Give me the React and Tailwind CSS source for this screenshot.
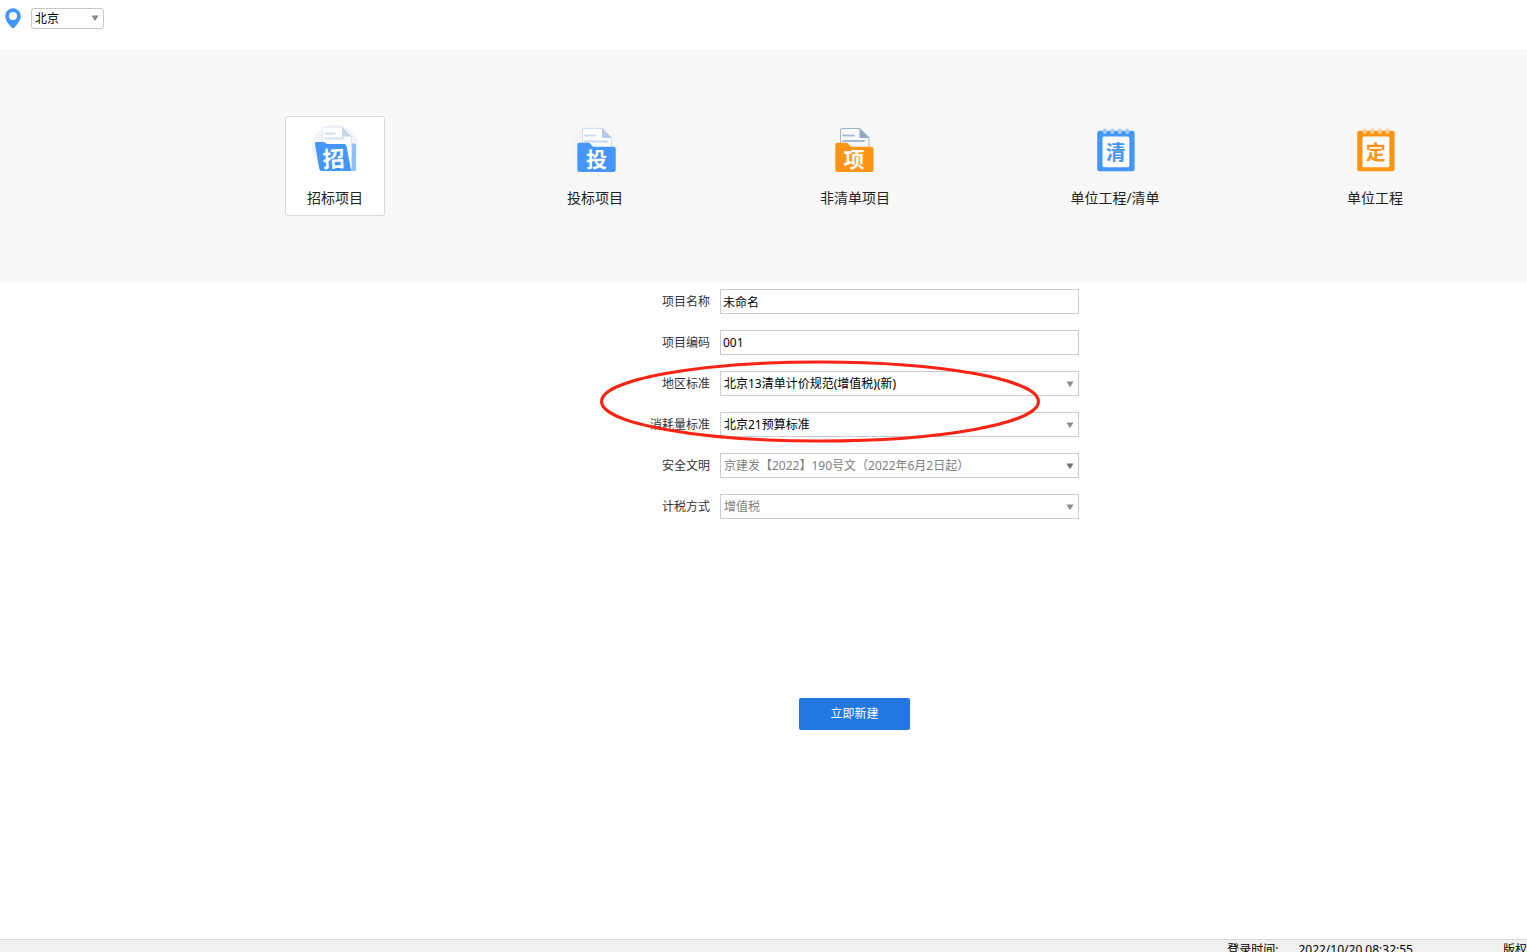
const glyph = "font-['Noto_Sans_CJK_SC',sans-serif] font-bold";

function Pin() {
  return (
    <svg className="h-[21px] w-4 shrink-0" viewBox="0 0 16 21" aria-hidden="true">
      <path fillRule="evenodd" fill="#4496fb" d="M8 .3a7.8 7.8 0 0 1 7.8 7.8c0 4.100-3.300 7.900-6.100 11.200-1 1.200-2.400 1.200-3.400 0C3.500 16 .2 12.200.2 8.100A7.800 7.800 0 0 1 8 .3Zm0 3.800a4 4 0 1 0 0 8 4 4 0 0 0 0-8Z" />
    </svg>
  );
}

function Arrow({ className, color = '#8b8b8b' }) {
  return (
    <svg className={`pointer-events-none absolute h-[6px] w-2 ${className}`} viewBox="0 0 8 6" aria-hidden="true">
      <path fill={color} d="M.5.5h7L4.500 5.500h-1Z" />
    </svg>
  );
}

function TiltedFolder() {
  return (
    <svg className="size-[50px]" viewBox="0 0 50 50" aria-hidden="true">
      <circle cx="25" cy="24" r="23.500" fill="#f4f4f6" />
      <path fill="#8ec0fa" d="M36 19.500h8.500q1.500 0 1.500 1.500v24.500q0 1.500-1.500 1.500H36Z" />
      <path fill="#fff" stroke="#dce5f1" d="M12 26V4.500q0-1.500 1.500-1.500H32l9.500 9.500V45H34Z" />
      <path fill="#c9d7ea" d="M32 3l9.700 9.700H33q-1 0-1-1Z" />
      <path stroke="#d5e0ef" strokeWidth="2" strokeLinecap="round" d="M15.500 9.500h9M15.500 14.500h18" />
      <path fill="#4496fb" d="M6.500 18h7.300q1 0 1.700.8l1.200 1.200h17.500q2 0 2.300 2l4.300 23q.3 2-1.500 2H11.500q-1.800 0-2.200-2L5 20q-.3-2 1.500-2Z" />
      <text x="23.500" y="43" textAnchor="middle" fontSize="22" fill="#fff" className={glyph} transform="rotate(-3 23 35)">招</text>
    </svg>
  );
}

function BidFolder() {
  return (
    <svg className="size-[50px]" viewBox="0 0 50 50" aria-hidden="true">
      <circle cx="25" cy="24" r="23.500" fill="#f5f5f7" />
      <path fill="#fff" stroke="#cfdded" d="M12.500 30V6q0-1.500 1.500-1.500h18.500l9 9V30Z" />
      <path fill="#b5cbe6" d="M32 4l9.700 10H33q-1 0-1-1Z" />
      <path stroke="#c9d9eb" strokeWidth="2" strokeLinecap="round" d="M15 11.500h10.500M15 17.500h22" />
      <path fill="#4496fb" d="M9.300 18.700h9q1 0 1.800.9l2 2.400q.8.800 1.900.8h19q2.700 0 2.700 2.200v20.500q0 2.500-2.500 2.500H9.800q-2.500 0-2.500-2.500v-25q0-1.800 2-1.800Z" />
      <text x="26.500" y="42.500" textAnchor="middle" fontSize="21" fill="#fff" className={glyph}>投</text>
    </svg>
  );
}

function ProjectFolder() {
  return (
    <svg className="size-[50px]" viewBox="0 0 50 50" aria-hidden="true">
      <path fill="#f8fafc" stroke="#9db3c8" d="M10.500 30V6q0-1.500 1.500-1.500h18l9 9V30Z" />
      <path fill="#8fa8c4" d="M29.500 4l9.700 10h-8.700q-1 0-1-1Z" />
      <path stroke="#a9bccf" strokeWidth="1.800" strokeLinecap="round" d="M13 11.500h11M13 17h21" />
      <path fill="#fb9513" d="M7.300 18.700h9q1 0 1.800.9l2 2.400q.8.800 1.900.8h19q2.500 0 2.500 2.200v20.500q0 2.500-2.500 2.500H7.800q-2.500 0-2.500-2.500v-25q0-1.800 2-1.800Z" />
      <text x="24" y="42.500" textAnchor="middle" fontSize="21" fill="#fff" className={glyph}>项</text>
    </svg>
  );
}

function Notepad({ char, color, ring }) {
  return (
    <svg className="size-[50px]" viewBox="0 0 50 50" aria-hidden="true">
      <rect x="7.200" y="6.700" width="37.400" height="40.600" rx="2.500" fill={color} />
      {[14.8, 22.3, 29.8, 37.3].map((x) => (
        <rect key={x} x={x - 2} y="4.500" width="4" height="5.500" rx="2" fill={ring} />
      ))}
      <rect x="12.500" y="12.500" width="26.800" height="30.800" rx="1.500" fill="#fff" />
      <text x="25.800" y="35.500" textAnchor="middle" fontSize="20" fill={color} className={glyph}>{char}</text>
    </svg>
  );
}

const kinds = [
  { label: '招标项目', icon: <TiltedFolder />, active: true },
  { label: '投标项目', icon: <BidFolder /> },
  { label: '非清单项目', icon: <ProjectFolder /> },
  { label: '单位工程/清单', icon: <Notepad char="清" color="#4496fb" ring="#a5cbf9" /> },
  { label: '单位工程', icon: <Notepad char="定" color="#fb9513" ring="#f9cf98" /> },
];

const fields = [
  { id: 'name', label: '项目名称', value: '未命名' },
  { id: 'code', label: '项目编码', value: '001' },
  { id: 'region', label: '地区标准', value: '北京13清单计价规范(增值税)(新)', select: true },
  { id: 'quota', label: '消耗量标准', value: '北京21预算标准', select: true },
  { id: 'safety', label: '安全文明', value: '京建发【2022】190号文（2022年6月2日起）', select: true, muted: true, arrow: '#6f6f6f' },
  { id: 'tax', label: '计税方式', value: '增值税', select: true, muted: true },
];

function Field({ id, label, value, select, muted, arrow }) {
  return (
    <div className="grid grid-cols-[80px_359px] items-center gap-[10px]">
      <label htmlFor={id} className="text-right text-[#333]">{label}</label>
      {select ? (
        <div className="relative">
          <select
            id={id}
            defaultValue={value}
            className={`block h-[25px] w-full appearance-none border border-[#cdcdcd] bg-white pr-6 pl-[3px] outline-none ${muted ? 'text-[#808080]' : 'text-black'}`}
          >
            <option>{value}</option>
          </select>
          <Arrow className="top-[10px] right-[5px]" color={arrow} />
        </div>
      ) : (
        <input id={id} defaultValue={value} className="block h-[25px] w-full border border-[#cdcdcd] bg-white px-[2px] text-black outline-none" />
      )}
    </div>
  );
}

export default function App() {
  return (
    <div className="flex h-screen flex-col overflow-hidden bg-white font-['Noto_Sans','Noto_Sans_CJK_SC',sans-serif] text-xs">
      <header className="flex h-[49px] shrink-0 items-start gap-[10px] pt-2 pl-[5px]">
        <Pin />
        <div className="relative">
          <select aria-label="地区" className="block h-[21px] w-[73px] appearance-none rounded-[3px] border border-[#c8c8c8] bg-white pl-[3px] text-black outline-none">
            <option>北京</option>
          </select>
          <Arrow className="top-[7px] right-[5px]" />
        </div>
      </header>

      <nav className="grid h-[234px] shrink-0 grid-cols-5 items-start justify-items-center bg-[#f8f8f8] pt-[67px] pr-[22px] pl-[205px]">
        {kinds.map((k) => (
          <button
            key={k.label}
            type="button"
            className={`flex size-[100px] flex-col items-center gap-[14px] rounded-[3px] border pt-[7px] text-sm text-[#222] ${k.active ? 'border-[#d3dbdf] bg-white' : 'border-transparent'}`}
          >
            {k.icon}
            <span className="leading-5 whitespace-nowrap">{k.label}</span>
          </button>
        ))}
      </nav>

      <main className="flex min-h-0 flex-1 flex-col items-center pt-[6px] pl-[182px]">
        <form className="relative flex flex-col items-center" onSubmit={(e) => e.preventDefault()}>
          <div className="flex flex-col gap-4">
            {fields.map((f) => <Field key={f.id} {...f} />)}
          </div>
          <svg className="pointer-events-none absolute top-[71px] -left-[30px] h-[83px] w-[441px]" viewBox="0 0 441 83" aria-hidden="true">
            <ellipse cx="220" cy="41.500" rx="218.500" ry="39.500" fill="none" stroke="#fb2414" strokeWidth="3" />
          </svg>
          <button type="submit" className="mt-[179px] h-8 w-[111px] rounded-[2px] bg-[#2277e0] text-white">立即新建</button>
        </form>
      </main>

      <footer className="flex h-[13px] shrink-0 justify-end overflow-hidden border-t border-[#d9d9d9] bg-[#f0f0f0] leading-5 whitespace-nowrap text-black">
        <span className="mr-5">登录时间:</span>
        <time className="mr-[90px]">2022/10/20 08:32:55</time>
        <span>版权</span>
      </footer>
    </div>
  );
}
